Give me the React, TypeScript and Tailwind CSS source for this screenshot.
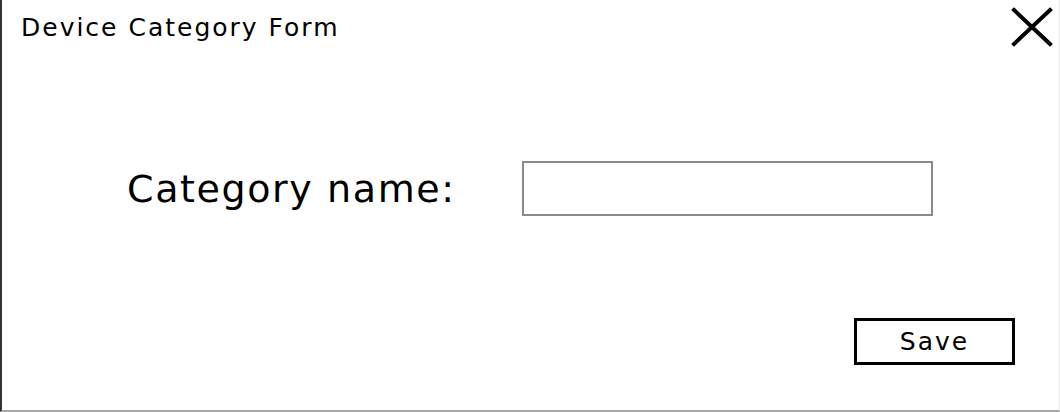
import { useState } from "react";

export default function App() {
  const [name, setName] = useState("");

  return (
    <div
      className="flex h-[412px] w-[1060px] flex-col border-b-2 border-l-2 border-r border-b-[#a8a8a8] border-l-[#333] border-r-[#e6e6e6] bg-white text-black"
      style={{ fontFamily: '"DejaVu Sans", "Noto Sans", sans-serif' }}
    >
      {/* Titre + fermeture */}
      <div className="flex items-start justify-between pl-[19px] pr-[6px] pt-[7px]">
        <h1 className="pt-[6px] text-[25px] leading-[30px] tracking-[2px]">Device Category Form</h1>
        <button aria-label="Close" className="h-[40px] w-[42px]">
          <svg viewBox="0 0 42 40" className="h-[40px] w-[42px]">
            <path d="M3 3 L39 37 M39 3 L3 37" stroke="black" strokeWidth="4" strokeLinecap="square" fill="none" />
          </svg>
        </button>
      </div>

      {/* Champ */}
      <div className="mt-[114px] flex items-center">
        <label className="ml-[125px] w-[395px] text-[38px] leading-[44px] tracking-[1.6px]">Category name:</label>
        <input
          value={name}
          onChange={(e) => setName(e.target.value)}
          className="h-[55px] w-[411px] border-2 border-[#8a8a8a] px-2 text-[22px] outline-none"
        />
      </div>

      {/* Enregistrer */}
      <div className="mt-[102px] flex justify-end pr-[44px]">
        <button className="h-[47px] w-[161px] border-[3px] border-black text-[25px] leading-none tracking-[2px]">Save</button>
      </div>
    </div>
  );
}
